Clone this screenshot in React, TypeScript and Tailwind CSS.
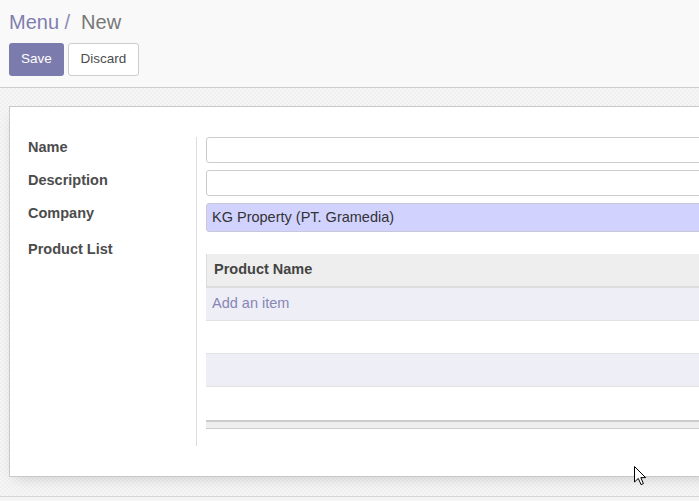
const fields = [
  { label: 'Name', value: '', filled: false },
  { label: 'Description', value: '', filled: false },
];

const rows = [
  { text: 'Add an item', striped: true },
  { text: '', striped: false },
  { text: '', striped: true },
  { text: '', striped: false },
];

const Cursor = () => (
  <svg
    className="absolute left-[634px] top-[466px]"
    width="13"
    height="20"
    viewBox="0 0 13 20"
  >
    <path
      d="M0.5 0.5 L0.5 16 L4.3 12.4 L7 18.6 L9.4 17.6 L6.8 11.6 L11.6 11.6 Z"
      fill="#fff"
      stroke="#000"
      strokeWidth="1"
      strokeLinejoin="miter"
    />
  </svg>
);

const App = () => {
  return (
    <div className="relative w-[699px] h-[501px] overflow-hidden flex flex-col bg-[#f9f9f9] font-['Liberation_Sans',Arial,sans-serif] text-[#4c4c4c]">
      {/* control panel */}
      <div className="h-[88px] shrink-0 border-b border-[#cdcdcd] bg-[#f9f9f9] pl-[9px] pt-[10px]">
        <div className="text-[20px] leading-[24px] whitespace-nowrap">
          <span className="text-[#7f7eae]">Menu</span>
          <span className="text-[#8a89b5] ml-[5.5px]">/</span>
          <span className="text-[#777777] ml-[11px]">New</span>
        </div>
        <div className="mt-[9px] flex gap-[4px]">
          <button className="w-[55px] h-[33px] rounded-[3px] bg-[#7c7bad] text-white text-[13.5px]">
            Save
          </button>
          <button className="w-[71px] h-[33px] rounded-[3px] border border-[#cccccc] bg-white text-[#4c4c4c] text-[13.5px]">
            Discard
          </button>
        </div>
      </div>

      {/* form body */}
      <div className="flex-1 min-h-0 flex flex-col bg-[repeating-conic-gradient(#efefef_0_25%,#f6f6f6_0_50%)] bg-[length:4px_4px]">
        <div className="flex-1 pt-[18px] pl-[9px]">
          <div className="w-[820px] h-[371px] bg-white border border-[#c9c9c9] shadow-[0_6px_14px_-6px_rgba(0,0,0,0.18)] pt-[30px] pl-[18px]">
            <div className="grid grid-cols-[168px_1fr]">
              {fields.map((f) => (
                <div key={f.label} className="contents">
                  <div className="text-[14.5px] leading-[20px] font-bold">{f.label}</div>
                  <div className="border-l border-[#dddddd] pl-[9px] pb-[7px]">
                    <div className="h-[26px] rounded-[3px] border border-[#cccccc] bg-white" />
                  </div>
                </div>
              ))}

              <div className="text-[14.5px] leading-[20px] font-bold">Company</div>
              <div className="border-l border-[#dddddd] pl-[9px] pb-[7px]">
                <div className="h-[29px] rounded-[3px] border border-[#c8c8d8] bg-[#d2d2ff] pl-[5px] flex items-center text-[14.5px] text-[#333333] whitespace-nowrap">
                  KG Property (PT. Gramedia)
                </div>
              </div>

              <div className="text-[14.5px] leading-[20px] font-bold">Product List</div>
              <div className="border-l border-[#dddddd] pl-[9px] pt-[15px] pb-[17px]">
                <div className="h-[34px] bg-[#eeeeee] border-l border-[#dcdcdc] border-b-2 border-b-[#dddddd] pl-[7px] flex items-center text-[14.5px] font-bold text-[#444444]">
                  Product Name
                </div>
                {rows.map((r, i) => (
                  <div
                    key={i}
                    className={`h-[33px] border-b border-[#e2e2e2] pl-[6px] flex items-center text-[14.5px] text-[#8786b4] ${
                      r.striped ? 'bg-[#eeeef7]' : 'bg-white'
                    } ${i === rows.length - 1 ? 'border-b-0' : ''}`}
                  >
                    {r.text}
                  </div>
                ))}
                <div className="h-[9px] bg-[#eeeeee] border-t-2 border-[#cccccc] border-b border-b-[#cccccc]" />
              </div>
            </div>
          </div>
        </div>
        <div className="h-[5px] shrink-0 border-t border-[#d6d6d6] bg-[#f4f4f4]" />
      </div>

      <Cursor />
    </div>
  );
};

export default App;
